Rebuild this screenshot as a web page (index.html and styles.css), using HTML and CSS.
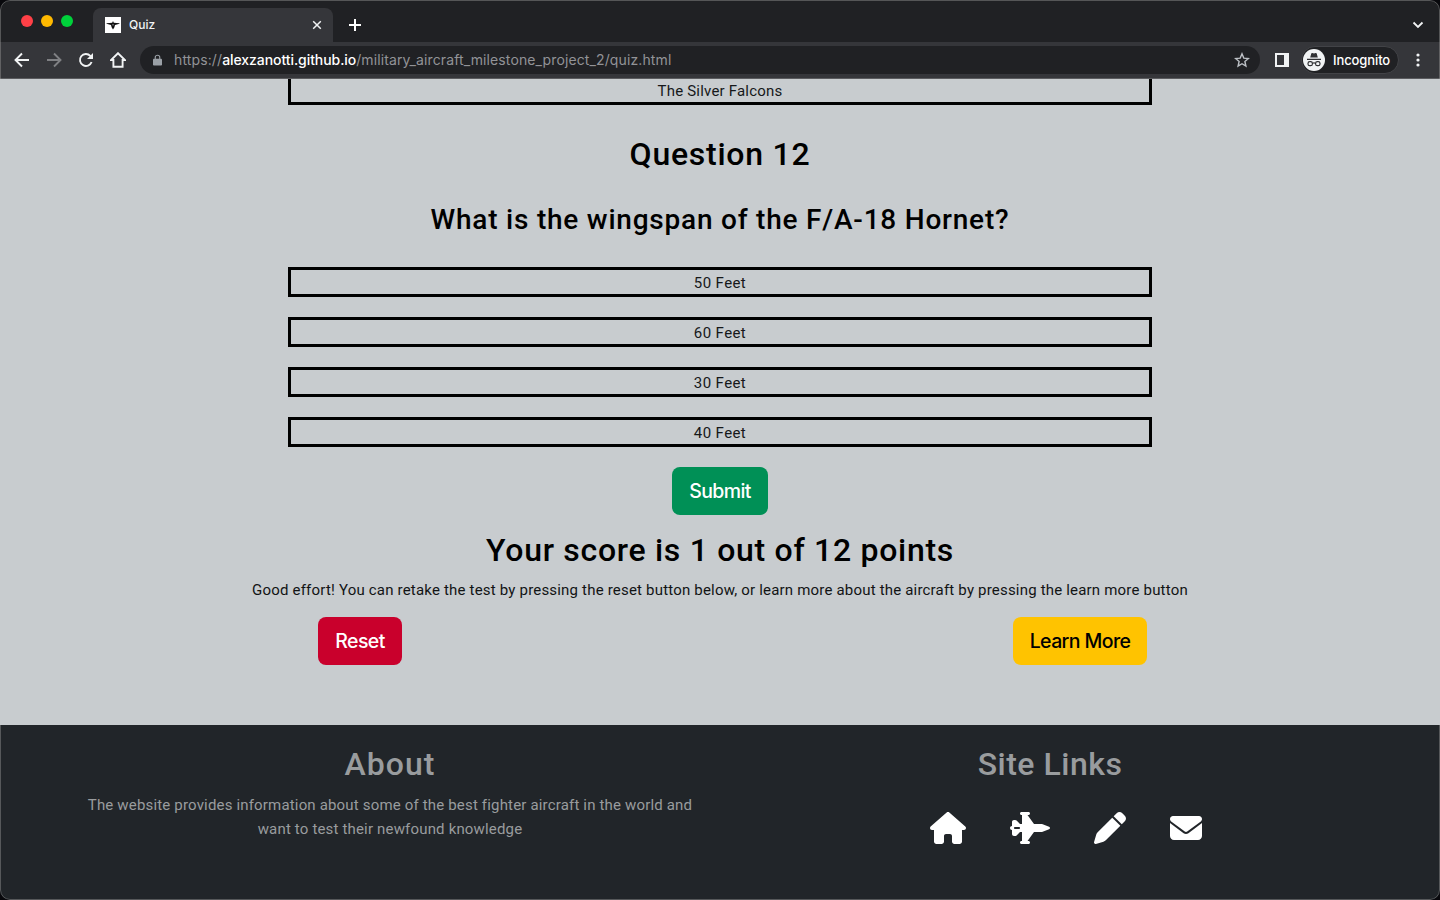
FILE: index.html
```html
<!DOCTYPE html>
<html lang="en">
<head>
<meta charset="utf-8">
<title>Quiz</title>
<link rel="stylesheet" href="styles.css">
</head>
<body>
<div class="window">
  <header class="tabs">
    <div class="lights"><i class="red"></i><i class="amber"></i><i class="green"></i></div>
    <div class="tab">
      <svg class="favicon" viewBox="0 0 16 16"><path fill="#fff" d="M0 0h16v16H0z"/><path fill="#111" d="M8 4l.8 1.700 5.700.5v.6L10 8l-.6 2.200L8 12.500l-1.400-2.300L6 8 1.500 6.800v-.6l5.700-.5z"/><path fill="#aaa" d="M7.500 7h1v1.500h-1z"/></svg>
      <span class="tab-title">Quiz</span>
      <svg class="close" viewBox="0 0 10 10"><path d="M1.200 1.200l7.600 7.600M8.800 1.200L1.200 8.800"/></svg>
    </div>
    <svg class="plus" viewBox="0 0 14 14"><path d="M7 1v12M1 7h12"/></svg>
    <svg class="chevron" viewBox="0 0 12 8"><path d="M1.500 1.500L6 6l4.500-4.500"/></svg>
  </header>
  <nav class="toolbar">
    <svg class="nav-icon" viewBox="0 0 16 16"><path d="M15 8H2M8 1.500L1.500 8 8 14.500"/></svg>
    <svg class="nav-icon dim" viewBox="0 0 16 16"><path d="M1 8h13M8 1.500L14.500 8 8 14.500"/></svg>
    <svg class="nav-icon" viewBox="0 0 16 16"><path d="M13.600 10A6 6 0 1 1 12.300 3.800L14 5.500"/><path class="solid" d="M15 1v6H9z"/></svg>
    <svg class="nav-icon" viewBox="0 0 16 16"><path d="M8 1.200L1 8h2.400v6.800h9.200V8H15z"/></svg>
    <div class="address">
      <svg class="lock" viewBox="0 0 10 12"><path fill="#9aa0a6" d="M1 4.500h8q1 0 1 1V11q0 1-1 1H1q-1 0-1-1V5.500q0-1 1-1z"/><path fill="none" stroke="#9aa0a6" stroke-width="1.300" d="M2.500 5V3a2.500 2.300 0 0 1 5 0v2"/></svg>
      <span class="url">https://<b>alexzanotti.github.io</b>/military_aircraft_milestone_project_2/quiz.html</span>
      <svg class="star" viewBox="0 0 16 16"><path d="M8 1.800l1.800 4.300 4.600.4-3.500 3 1 4.600L8 11.700l-3.900 2.400 1-4.600-3.500-3 4.600-.4z"/></svg>
    </div>
    <svg class="panel" viewBox="0 0 14 14"><path fill="#f1f3f4" fill-rule="evenodd" d="M0 0h14v14H0zM2 2v10h7V2z"/></svg>
    <div class="incognito">
      <svg viewBox="0 0 22 22"><circle cx="11" cy="11" r="11" fill="#f1f3f4"/><path fill="#303134" d="M7.200 8.500l1-3.800q.3-.9 1.200-.6l1.600.4 1.600-.4q.9-.3 1.200.6l1 3.800zM4 9.700h14v1.300H4z"/><g fill="none" stroke="#303134" stroke-width="1.200"><rect x="5" y="12.700" width="4.400" height="4" rx="1.800"/><rect x="12.600" y="12.700" width="4.400" height="4" rx="1.800"/><path d="M9.400 14.300q1.600-.8 3.200 0"/></g></svg>
      <span>Incognito</span>
    </div>
    <svg class="more" viewBox="0 0 4 14"><circle cx="2" cy="2" r="1.600"/><circle cx="2" cy="7" r="1.600"/><circle cx="2" cy="12" r="1.600"/></svg>
  </nav>
  <main class="quiz">
    <div class="answer clipped">The Silver Falcons</div>
    <h2 class="number">Question 12</h2>
    <h3 class="question">What is the wingspan of the F/A-18 Hornet?</h3>
    <div class="answers">
      <div class="answer">50 Feet</div>
      <div class="answer">60 Feet</div>
      <div class="answer">30 Feet</div>
      <div class="answer">40 Feet</div>
    </div>
    <button class="btn submit">Submit</button>
    <h2 class="score">Your score is 1 out of 12 points</h2>
    <p class="feedback">Good effort! You can retake the test by pressing the reset button below, or learn more about the aircraft by pressing the learn more button</p>
    <div class="actions">
      <div><button class="btn reset">Reset</button></div>
      <div><button class="btn learn">Learn More</button></div>
    </div>
  </main>
  <footer class="footer">
    <section>
      <h2 class="about">About</h2>
      <p>The website provides information about some of the best fighter aircraft in the world and<br>want to test their newfound knowledge</p>
    </section>
    <section>
      <h2 class="links-title">Site Links</h2>
      <div class="links">
        <svg width="36" height="32" viewBox="0 0 576 512"><path d="M575.800 255.500c0 18-15 32.100-32 32.100h-32l.7 160.200c0 2.700-.2 5.400-.5 8.100V472c0 22.100-17.900 40-40 40H392c-22.100 0-40-17.900-40-40V384c0-17.700-14.300-32-32-32H256c-17.700 0-32 14.300-32 32v88c0 22.100-17.900 40-40 40H104c-22.100 0-40-17.900-40-40V287.600H32c-18 0-32-14-32-32.100c0-9 3-17 10-24L266.400 8c7-7 15-8 22-8s15 2 21 7L564.800 231.500c8 7 12 15 11 24z"/></svg>
        <svg width="40" height="32" viewBox="0 0 640 512"><path d="M160 24c0-13.300 10.700-24 24-24H296c13.300 0 24 10.700 24 24s-10.700 24-24 24H280L384 192H500.400c7.700 0 15.300 1.400 22.500 4.100L625 234.400c9 3.400 15 12 15 21.600s-6 18.200-15 21.600L522.900 315.900c-7.200 2.700-14.800 4.100-22.500 4.100H384L280 464h16c13.300 0 24 10.700 24 24s-10.700 24-24 24H184c-13.300 0-24-10.700-24-24s10.700-24 24-24h8V320H160l-54.600 54.600c-6 6-14.100 9.400-22.600 9.400H64c-17.700 0-32-14.300-32-32V288c-17.700 0-32-14.300-32-32s14.300-32 32-32V160c0-17.700 14.300-32 32-32H82.700c8.500 0 16.600 3.400 22.600 9.400L160 192h32V48h-8c-13.300 0-24-10.700-24-24zM80 240c-8.800 0-16 7.200-16 16s7.200 16 16 16h64c8.800 0 16-7.200 16-16s-7.200-16-16-16H80z"/></svg>
        <svg width="32" height="32" viewBox="0 0 512 512"><path d="M362.700 19.300L314.300 67.700 444.300 197.700l48.400-48.400c25-25 25-65.500 0-90.500L453.300 19.300c-25-25-65.500-25-90.500 0zm-71 71L58.600 323.500c-10.400 10.400-18 23.300-22.200 37.400L1 481.200C-1.500 489.700 .8 498.800 7 505s15.300 8.500 23.700 6.100l120.300-35.400c14.100-4.200 27-11.800 37.400-22.200L421.700 220.300 291.700 90.300z"/></svg>
        <svg width="32" height="32" viewBox="0 0 512 512"><path d="M48 64C21.500 64 0 85.500 0 112c0 15.100 7.100 29.300 19.200 38.400L236.800 313.600c11.400 8.500 27 8.500 38.400 0L492.800 150.400c12.100-9.100 19.200-23.300 19.200-38.400c0-26.500-21.500-48-48-48H48zM0 176V384c0 35.300 28.700 64 64 64H448c35.300 0 64-28.700 64-64V176L294.400 339.200c-22.800 17.100-54 17.100-76.800 0L0 176z"/></svg>
      </div>
    </section>
  </footer>
</div>
</body>
</html>
```
FILE: styles.css
```css
* { box-sizing: border-box; }
html { background: #08080c; }
body { margin: 0; width: 1440px; height: 900px; overflow: hidden; font-family: Roboto, sans-serif; }
h2, h3, p { margin: 0; }
svg { display: block; flex: none; }
.window { position: relative; height: 900px; border-radius: 10px; overflow: hidden; display: flex; flex-direction: column; background: #202124; }
.window::after { content: ""; position: absolute; inset: 0; border: 1px solid rgba(150, 150, 150, .45); border-radius: 10px; pointer-events: none; }

.tabs { height: 42px; display: flex; align-items: flex-end; background: #202124; }
.lights { display: flex; gap: 8px; padding: 0 20px 15px 21px; }
.lights i { width: 12px; height: 12px; border-radius: 50%; }
.red { background: #ff4047; }
.amber { background: #ffb900; }
.green { background: #00d23b; }
.tab { width: 240px; height: 34px; background: #35363a; border-radius: 8px 8px 0 0; display: flex; align-items: center; padding: 0 11px 0 12px; }
.favicon { width: 16px; height: 16px; }
.tab-title { flex: 1; margin-left: 8px; padding-bottom: 2px; font: 500 12px Inter, sans-serif; color: #f1f3f4; }
.close { width: 10px; height: 10px; fill: none; stroke: #f1f3f4; stroke-width: 1.5; }
.plus { width: 14px; height: 14px; margin: 0 0 10px 15px; fill: none; stroke: #fff; stroke-width: 2; }
.chevron { width: 12px; height: 8px; margin: 0 16px 13px auto; fill: none; stroke: #f1f3f4; stroke-width: 1.8; }

.toolbar { height: 37px; display: flex; align-items: center; background: #35363a; border-bottom: 1px solid #5b5c5f; padding: 0 20px 0 14px; }
.nav-icon { width: 16px; height: 16px; margin-right: 16px; fill: none; stroke: #f1f3f4; stroke-width: 1.9; }
.nav-icon.dim { stroke: #7f8083; }
.nav-icon .solid { fill: #f1f3f4; stroke: none; }
.nav-icon:nth-child(4) { margin-right: 14px; }
.address { width: 1120px; height: 28px; background: #202124; border-radius: 14px; display: flex; align-items: center; padding: 0 10px 0 13px; }
.lock { width: 9px; height: 12px; }
.url { flex: 1; margin-left: 12px; padding-bottom: 2px; font: 400 14px Inter, sans-serif; letter-spacing: .12px; color: #929397; white-space: nowrap; }
.url b { font-weight: 500; color: #fff; letter-spacing: -.07px; }
.star { width: 16px; height: 16px; fill: none; stroke: #bdc1c6; stroke-width: 1.4; }
.panel { width: 14px; height: 14px; margin-left: 15px; }
.incognito { width: 98px; height: 28px; margin-left: 12px; border: 1px solid #424347; border-radius: 14px; background: #202124; display: flex; align-items: center; gap: 8px; padding-left: 1px; font: 500 13px Inter, sans-serif; letter-spacing: -.1px; color: #fff; }
.incognito svg { width: 22px; height: 22px; }
.more { width: 4px; height: 14px; margin-left: 17px; fill: #f1f3f4; }

.quiz { position: relative; z-index: 1; height: 646px; flex: none; overflow: hidden; background: #c8cccf; color: #000; text-align: center; display: flex; flex-direction: column; align-items: center; }
.answer { flex: none; width: 864px; height: 30px; border: 3px solid #000; font-size: 15px; line-height: 26px; letter-spacing: .4px; color: #16181a; }
.clipped { margin-top: -4px; letter-spacing: .2px; }
.number, .score, .footer h2 { font: 500 32px/38px Roboto, sans-serif; letter-spacing: .75px; }
.number { margin-top: 30px; }
.question { margin-top: 30px; font: 500 28px/34px Roboto, sans-serif; letter-spacing: .78px; white-space: nowrap; }
.answers { margin-top: 30px; display: grid; gap: 20px; }
.btn { height: 48px; border: 0; padding: 0; border-radius: 8px; font: 500 19.5px Inter, sans-serif; letter-spacing: -.6px; color: #fff; }
.submit { width: 96px; margin-top: 20px; background: #009056; }
.score { margin-top: 16px; letter-spacing: .7px; }
.feedback { margin-top: 9px; font-size: 15px; line-height: 24px; letter-spacing: .19px; color: #121415; white-space: nowrap; }
.actions { width: 1440px; margin-top: 15px; display: grid; grid-template-columns: 1fr 1fr; }
.reset { width: 84px; background: #c9002c; }
.learn { width: 134px; background: #ffc300; color: #000; }

.footer { flex: 1; background: #212529; color: #999c9e; padding: 20px 60px 0; display: grid; grid-template-columns: 1fr 1fr; text-align: center; }
.footer .about { letter-spacing: 1px; }
.footer .links-title { letter-spacing: .5px; }
.footer p { margin-top: 10px; font-size: 15px; line-height: 24px; letter-spacing: .17px; }
.links { display: flex; gap: 44px; justify-content: center; margin: 29px 0 0 32px; fill: #fff; }
```
